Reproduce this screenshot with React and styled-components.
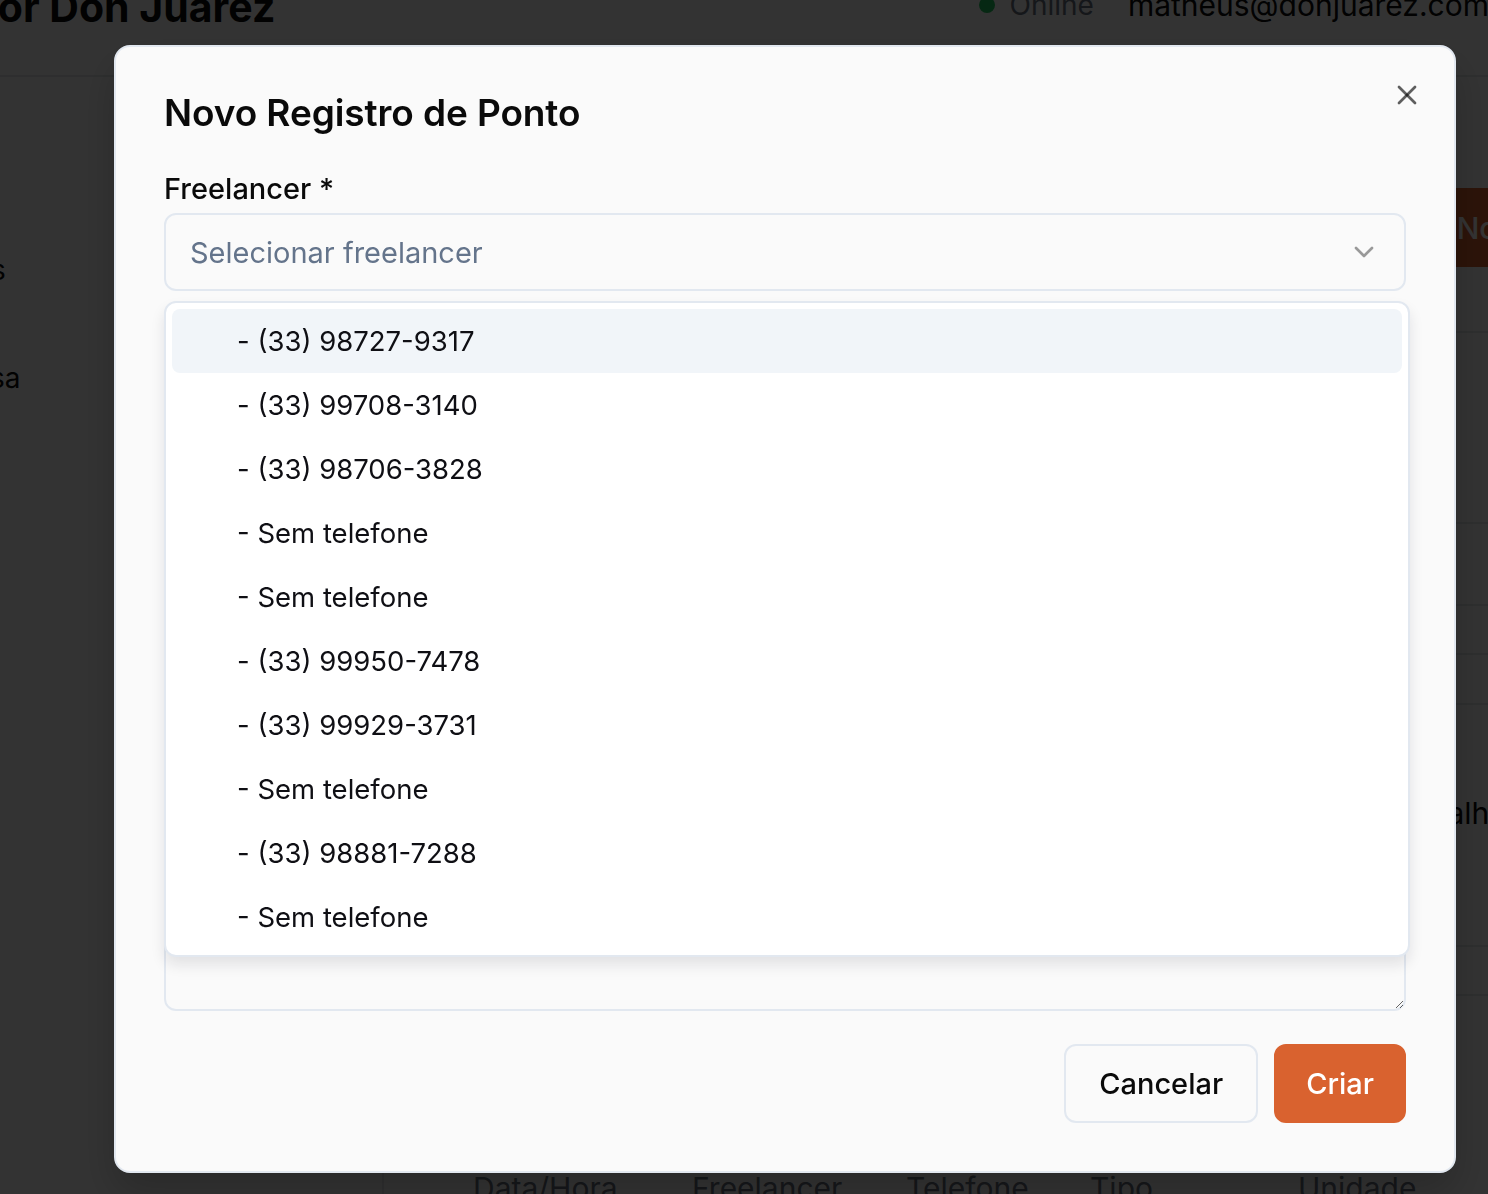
import React from 'react';
import styled, { createGlobalStyle } from 'styled-components';
import { X, ChevronDown, Plus } from 'lucide-react';

// Estilos globales: sin margen, fuente base y sin scroll
const GlobalStyle = createGlobalStyle`
  * { box-sizing: border-box; }
  html, body { margin: 0; padding: 0; height: 100%; overflow: hidden; }
  body { font-family: Inter, "Noto Sans", sans-serif; background: #ffffff; color: #0a0a0a; }
  #root { height: 100%; }
`;

/* ---------- Página de fondo (queda bajo el overlay) ---------- */

const Page = styled.div`
  width: 1893px;
  margin: -40px 0 0 -128px;
  background: #ffffff;
`;

const TopBar = styled.header`
  height: 117px;
  display: flex;
  justify-content: space-between;
  align-items: center;
  padding: 0 48px 22px 33px;
  border-bottom: 2px solid #e5e7eb;
`;

const Brand = styled.h1`
  margin: 0;
  font-size: 41px;
  font-weight: 700;
  line-height: 48px;
`;

const UserArea = styled.div`
  display: flex;
  align-items: center;
  gap: 34px;
  margin-right: 228px;
  margin-bottom: 4px;
`;

const Status = styled.span`
  display: flex;
  align-items: center;
  gap: 14px;
  font-size: 28px;
  color: #6b7280;

  &::before {
    content: '';
    width: 16px;
    height: 16px;
    border-radius: 50%;
    background: #22c55e;
  }
`;

const Email = styled.span`
  font-size: 30px;
`;

const Body = styled.div`
  display: flex;
`;

const Sidebar = styled.nav`
  width: 512px;
  flex-shrink: 0;
  min-height: 1200px;
  border-right: 2px solid #e5e7eb;
  padding: 31px 16px;
  display: flex;
  flex-direction: column;
`;

const NavItem = styled.div`
  height: 108px;
  display: flex;
  align-items: center;
  padding-left: 17px;
  font-size: 28px;
`;

const Main = styled.main`
  flex: 1;
  padding: 48px 75px 48px 48px;
  display: flex;
  flex-direction: column;
  gap: 64px;
`;

const Toolbar = styled.div`
  display: flex;
  justify-content: space-between;
  align-items: flex-end;
  height: 142px;
`;

const PageTitle = styled.h2`
  margin: 0;
  font-size: 48px;
  font-weight: 700;
`;

const PrimaryPageButton = styled.div`
  height: 79px;
  display: flex;
  align-items: center;
  gap: 16px;
  padding: 0 32px;
  border-radius: 12px;
  background: #d9622f;
  color: #ffffff;
  font-size: 30px;
  font-weight: 500;
`;

const Card = styled.section`
  border: ${(p) => (p.$plain ? 'none' : '2px solid #e5e7eb')};
  border-radius: 16px;
  height: ${(p) => p.$height}px;
  margin-top: ${(p) => p.$offset || 0}px;
`;

const TableRow = styled.div`
  height: ${(p) => p.$height}px;
  border-bottom: ${(p) => (p.$last ? 'none' : '2px solid #e5e7eb')};
  display: flex;
  align-items: center;
  padding: 0 0 ${(p) => p.$lift || 0}px 949px;
  font-size: 30px;
`;

const HeadRow = styled.div`
  display: flex;
  padding: 110px 0 0 41px;
  font-size: 30px;
  color: #6b7280;
`;

const HeadCell = styled.span`
  width: ${(p) => p.$w}px;
`;

/* ---------- Diálogo ---------- */

const Overlay = styled.div`
  position: fixed;
  inset: 0;
  background: rgba(0, 0, 0, 0.8);
  display: flex;
  align-items: flex-start;
  padding: 45px 0 0 114px;
`;

const Dialog = styled.div`
  position: relative;
  width: 1342px;
  background: #fafafa;
  border: 2px solid #e2e8f0;
  border-radius: 16px;
  padding: 43px 48px 48px 48px;
  box-shadow: 0 20px 40px rgba(0, 0, 0, 0.2);
`;

const CloseButton = styled.button`
  position: absolute;
  top: 32px;
  right: 31px;
  width: 32px;
  height: 32px;
  padding: 0;
  border: none;
  background: none;
  color: rgba(10, 10, 10, 0.65);
  display: flex;
`;

const Title = styled.h2`
  margin: 0 0 38px 0;
  font-size: 37px;
  font-weight: 600;
  line-height: 46px;
  letter-spacing: -0.1px;
`;

const Form = styled.div`
  display: flex;
  flex-direction: column;
  gap: 32px;
`;

const Field = styled.div`
  position: relative;
  display: flex;
  flex-direction: column;
  gap: 9px;
`;

const Label = styled.label`
  font-size: 29px;
  font-weight: 500;
  line-height: 30px;
`;

const Trigger = styled.div`
  height: 78px;
  border: 2px solid #e2e8f0;
  border-radius: 12px;
  background: #fafafa;
  display: flex;
  align-items: center;
  justify-content: space-between;
  padding: 0 24px;
  font-size: 29px;
  color: ${(p) => (p.$placeholder ? '#64748b' : '#0a0a0a')};

  svg {
    color: #0a0a0a;
    opacity: 0.4;
  }
`;

const TextArea = styled.textarea`
  height: 202px;
  border: 2px solid #e2e8f0;
  border-radius: 12px;
  background: #fafafa;
  padding: 16px 24px;
  font-family: inherit;
  font-size: 29px;
`;

const Popover = styled.div`
  position: absolute;
  top: calc(100% + 10px);
  left: 0;
  right: -4px;
  z-index: 5;
  background: #ffffff;
  border: 2px solid #e2e8f0;
  border-radius: 12px;
  padding: 6px;
  box-shadow: 0 8px 14px rgba(15, 23, 42, 0.1);
`;

const Option = styled.div`
  height: 64px;
  display: flex;
  align-items: center;
  padding-left: 65px;
  border-radius: 8px;
  font-size: 27.5px;
  color: #0f0f14;
  background: ${(p) => (p.$active ? '#f1f5f9' : 'transparent')};
`;

const Actions = styled.div`
  display: flex;
  justify-content: flex-end;
  gap: 16px;
  margin-top: 33px;
`;

const Button = styled.button`
  height: 79px;
  padding: 0 ${(p) => (p.$primary ? 30 : 33)}px;
  border-radius: 12px;
  font-family: inherit;
  font-size: 29px;
  font-weight: 500;
  border: 2px solid ${(p) => (p.$primary ? '#d9622f' : '#e2e8f0')};
  background: ${(p) => (p.$primary ? '#d9622f' : '#fafafa')};
  color: ${(p) => (p.$primary ? '#ffffff' : '#0a0a0a')};
`;

const freelancers = [
  { nome: '', telefone: '(33) 98727-9317' },
  { nome: '', telefone: '(33) 99708-3140' },
  { nome: '', telefone: '(33) 98706-3828' },
  { nome: '', telefone: '' },
  { nome: '', telefone: '' },
  { nome: '', telefone: '(33) 99950-7478' },
  { nome: '', telefone: '(33) 99929-3731' },
  { nome: '', telefone: '' },
  { nome: '', telefone: '(33) 98881-7288' },
  { nome: '', telefone: '' },
];

const App = () => (
  <>
    <GlobalStyle />
    <Page>
      <TopBar>
        <Brand>Gestor Don Juarez</Brand>
        <UserArea>
          <Status>Online</Status>
          <Email>matheus@donjuarez.com</Email>
        </UserArea>
      </TopBar>
      <Body>
        <Sidebar>
          <NavItem>Início</NavItem>
          <NavItem>Escalas</NavItem>
          <NavItem>Empresa</NavItem>
        </Sidebar>
        <Main>
          <Toolbar>
            <PageTitle>Registros de Ponto</PageTitle>
            <PrimaryPageButton>
              <Plus size={32} />
              Novo Registro
            </PrimaryPageButton>
          </Toolbar>
          <Card $height={193} />
          <Card $height={392} $offset={16}>
            <TableRow $height={49} />
            <TableRow $height={50} />
            <TableRow $height={242} $lift={24}>Trabalho</TableRow>
            <TableRow $height={47} $last />
          </Card>
          <Card $height={300} $plain>
            <HeadRow>
              <HeadCell $w={219}>Data/Hora</HeadCell>
              <HeadCell $w={214}>Freelancer</HeadCell>
              <HeadCell $w={184}>Telefone</HeadCell>
              <HeadCell $w={208}>Tipo</HeadCell>
              <HeadCell $w={200}>Unidade</HeadCell>
            </HeadRow>
          </Card>
        </Main>
      </Body>
    </Page>

    <Overlay>
      <Dialog>
        <CloseButton>
          <X size={32} strokeWidth={2} />
        </CloseButton>
        <Title>Novo Registro de Ponto</Title>
        <Form>
          <Field>
            <Label>Freelancer *</Label>
            <Trigger $placeholder>
              Selecionar freelancer
              <ChevronDown size={32} strokeWidth={2} />
            </Trigger>
            <Popover>
              {freelancers.map((f, i) => (
                <Option key={i} $active={i === 0}>
                  {f.nome} - {f.telefone || 'Sem telefone'}
                </Option>
              ))}
            </Popover>
          </Field>
          <Field>
            <Label>Tipo *</Label>
            <Trigger $placeholder>
              Selecionar tipo
              <ChevronDown size={32} strokeWidth={2} />
            </Trigger>
          </Field>
          <Field>
            <Label>Data/Hora *</Label>
            <Trigger />
          </Field>
          <Field>
            <Label>Unidade</Label>
            <Trigger $placeholder>
              Selecionar unidade
              <ChevronDown size={32} strokeWidth={2} />
            </Trigger>
          </Field>
          <Field>
            <Label>Observações</Label>
            <TextArea />
          </Field>
        </Form>
        <Actions>
          <Button>Cancelar</Button>
          <Button $primary>Criar</Button>
        </Actions>
      </Dialog>
    </Overlay>
  </>
);

export default App;
